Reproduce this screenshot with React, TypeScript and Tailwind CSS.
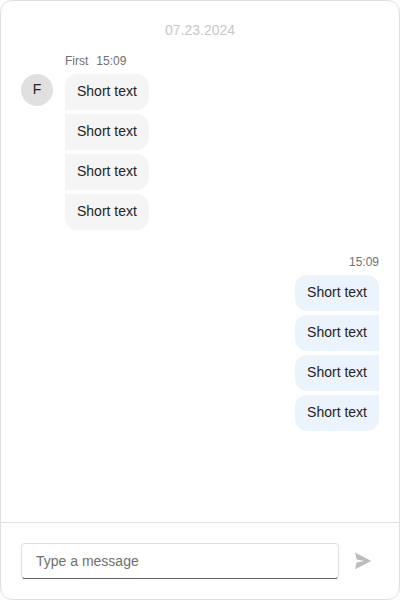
import React from "react";

const messages = ["Short text", "Short text", "Short text", "Short text"];

function corners(own: boolean, index: number) {
  const first = index === 0;
  const last = index === messages.length - 1;
  if (own) {
    return `rounded-l-xl ${first ? "rounded-tr-xl" : ""} ${last ? "rounded-br-xl" : ""}`;
  }
  return `rounded-r-xl ${first ? "rounded-tl-xl" : ""} ${last ? "rounded-bl-xl" : ""}`;
}

function MessageGroup({ own = false, author }: { own?: boolean; author?: string }) {
  return (
    <div className={`flex gap-3 ${own ? "justify-end" : ""}`}>
      {author && (
        <div className="mt-[21px] flex h-8 w-8 items-center justify-center rounded-full bg-[#e0e0e0] pb-0.5">
          {author[0]}
        </div>
      )}
      <div className={`flex flex-col ${own ? "items-end" : "items-start"}`}>
        <div className="mb-[5px] flex gap-2 text-xs leading-4 text-[#707070]">
          {author && <span>{author}</span>}
          <span>15:09</span>
        </div>
        <div className="flex flex-col gap-1">
          {messages.map((text, i) => (
            <div
              key={i}
              className={`h-9 px-3 pt-[7px] leading-5 ${own ? "bg-[#ebf3fc]" : "bg-[#f5f5f5]"} ${corners(own, i)}`}
            >
              {text}
            </div>
          ))}
        </div>
      </div>
    </div>
  );
}

export default function App() {
  return (
    <div className="flex h-[600px] w-[400px] flex-col overflow-hidden rounded-xl border border-[#e0e0e0] bg-white font-['Liberation_Sans',Arial,sans-serif] text-sm text-[#242424]">
      <div className="flex flex-1 flex-col px-5 pt-[19px]">
        <div className="text-center leading-5 text-[#c7c7c7]">07.23.2024</div>
        <div className="mt-[13px] flex flex-col gap-6">
          <MessageGroup author="First" />
          <MessageGroup own />
        </div>
      </div>
      <div className="flex h-[77px] items-center border-t border-[#e0e0e0] px-5">
        <input
          placeholder="Type a message"
          className="h-9 w-[318px] rounded border border-[#e0e0e0] border-b-[#616161] bg-white px-3.5 outline-none placeholder:text-[#707070]"
        />
        <button aria-label="Send" className="ml-3.5 flex h-5 w-5 items-center justify-center">
          <svg width="20" height="20" viewBox="0 0 20 20" fill="#bdbdbd">
            <path d="M2 1.6L18.3 10L2 18.3L3.6 11.4L11.5 10L3.6 8.6Z" />
          </svg>
        </button>
      </div>
    </div>
  );
}
